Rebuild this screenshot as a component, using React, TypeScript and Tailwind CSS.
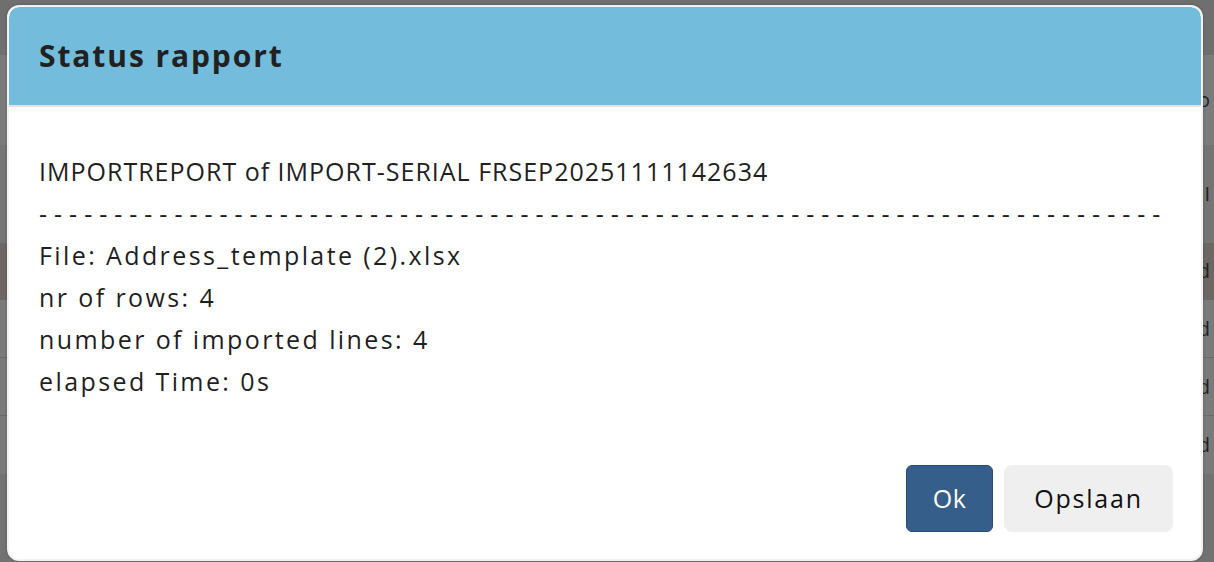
import React from "react";

const font = "font-['Open_Sans',_'Liberation_Sans',_sans-serif]";

const reportLines = [
  { text: "IMPORTREPORT of IMPORT-SERIAL FRSEP20251111142634", cls: "tracking-[1px]" },
  { text: "-".repeat(75), cls: "tracking-[7px]" },
  { text: "File: Address_template (2).xlsx", cls: "tracking-[2.4px]" },
  { text: "nr of rows: 4", cls: "tracking-[2.4px]" },
  { text: "number of imported lines: 4", cls: "tracking-[2.4px]" },
  { text: "elapsed Time: 0s", cls: "tracking-[2.4px]" },
];

function BackgroundPage() {
  return (
    <div className="flex flex-col w-full h-full">
      <div className="h-[55px] bg-[#6f6f6f]" />
      <div className="h-[90px] bg-[#7b7b7b] flex items-center justify-end pr-1 text-[#222] text-xl">o</div>
      <div className="h-[98px] bg-[#747474] flex items-center justify-end pr-1 text-[#222] text-xl">I</div>
      <div className="h-[57px] bg-[#6c6764] border-b border-[#666] flex items-center justify-end pr-1 text-[#222] text-xl">d</div>
      <div className="h-[58px] bg-[#7a7a7a] border-b border-[#6a6a6a] flex items-center justify-end pr-1 text-[#222] text-xl">d</div>
      <div className="h-[58px] bg-[#7a7a7a] border-b border-[#6a6a6a] flex items-center justify-end pr-1 text-[#222] text-xl">d</div>
      <div className="h-[58px] bg-[#7a7a7a] flex items-center justify-end pr-1 text-[#222] text-xl">d</div>
      <div className="flex-1 bg-[#727272]" />
    </div>
  );
}

export default function App() {
  return (
    <div className={`relative w-[1214px] h-[562px] overflow-hidden ${font}`}>
      <BackgroundPage />

      {/* Modal */}
      <div className="absolute left-[7px] top-[5px] w-[1196px] h-[556px] bg-white rounded-[12px] border-2 border-[#f2f2f2] shadow-[0_0_3px_rgba(0,0,0,0.25)] flex flex-col overflow-hidden">
        <div className="h-[100px] bg-[#73bcdb] border-b-2 border-[#e4e4e4] flex items-center px-[30px] rounded-t-[10px]">
          <h1 className="text-[30px] font-bold text-[#212121] tracking-[1.9px] leading-none">Status rapport</h1>
        </div>

        <div className="flex-1 flex flex-col pl-[30px] pr-[28px] pt-[43px]">
          <div className="flex flex-col text-[25px] leading-[42px] text-[#1f1f1f]">
            {reportLines.map((line, i) => (
              <div key={i} className={`whitespace-pre ${line.cls}`}>
                {line.text}
              </div>
            ))}
          </div>

          <div className="flex justify-end gap-[11px] mt-[63px]">
            <button className="w-[87px] h-[67px] rounded-[6px] bg-[#355e8a] border border-[#2a4b70] text-white text-[25px] tracking-[0.5px]">
              Ok
            </button>
            <button className="w-[169px] h-[67px] rounded-[8px] bg-[#efefef] text-[#111] text-[25px] tracking-[1.8px]">
              Opslaan
            </button>
          </div>
        </div>
      </div>
    </div>
  );
}
